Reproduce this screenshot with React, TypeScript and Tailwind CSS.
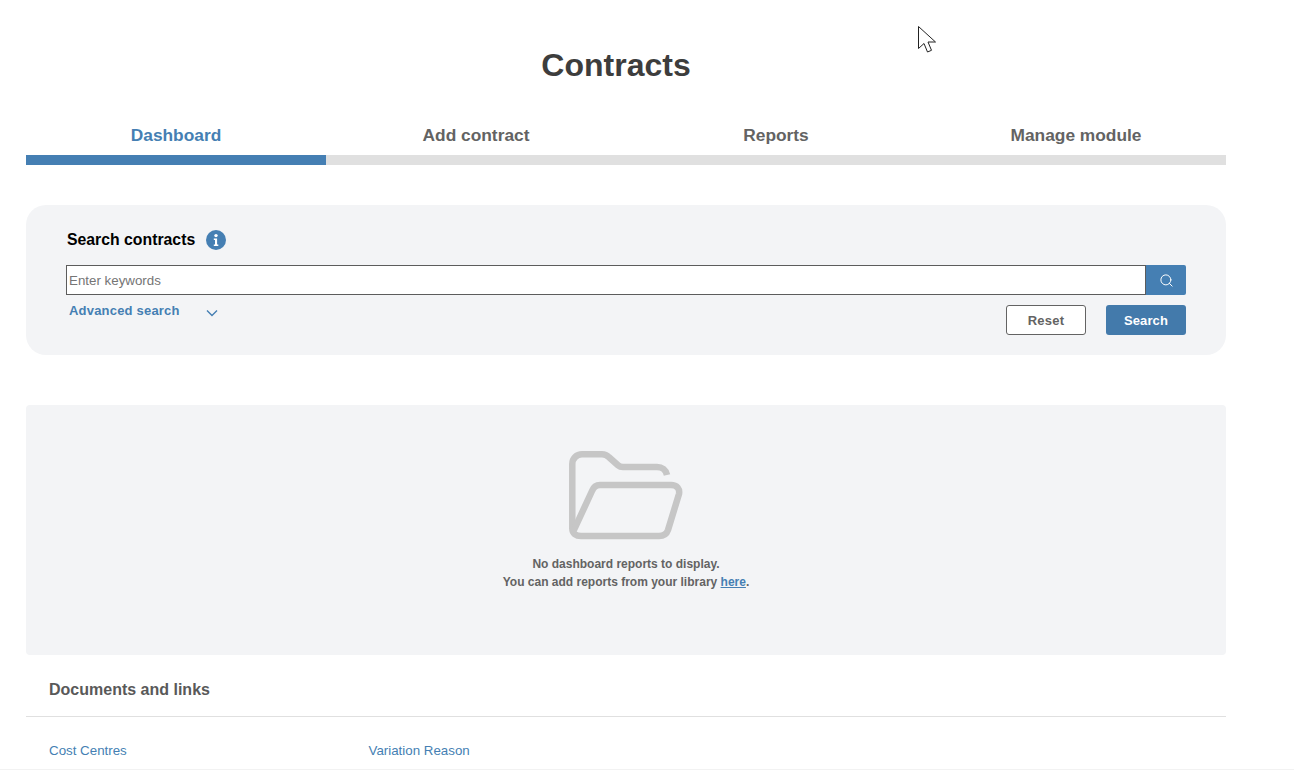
import { Search } from 'lucide-react';

const tabs = ['Dashboard', 'Add contract', 'Reports', 'Manage module'];

function InfoBadge() {
  return (
    <svg width="20" height="20" viewBox="0 0 20 20" className="ml-[11px]">
      <circle cx="10" cy="10" r="10" fill="#457fb3" />
      <circle cx="10" cy="5.6" r="1.7" fill="#fff" />
      <path d="M7.8 8.400h3.300v6h1.200v1.500H7.800v-1.500H9v-4.500H7.800z" fill="#fff" />
    </svg>
  );
}

function FolderIcon() {
  return (
    <svg width="114" height="90" viewBox="0 0 114 90" fill="none" stroke="#c6c6c6" strokeWidth="6.5" strokeLinejoin="round" strokeLinecap="butt">
      <path d="M3.300 78V13C3.300 7.500 7.500 3.300 13 3.300h20c3 0 5 1 7 3l9 8c1.500 1.300 3 1.700 5 1.700h34c5 0 9 3 10 8" />
      <path d="M4.500 80 23 40c1.500-4 4-6 8-6h71c6 0 9 4 8 9l-11 36c-1.500 4.500-4.500 6-9 6H12c-5 0-8.700-2.500-8.700-7.500" />
    </svg>
  );
}

export default function App() {
  return (
    <div className="relative h-[770px] overflow-hidden bg-white font-['Liberation_Sans',Arial,sans-serif]">
      <div className="ml-[26px] w-[1200px]">
        <h1 className="pt-[45px] pr-5 text-center text-[32px] leading-[40px] font-bold text-[#3d3d3d]">Contracts</h1>

        {/* tabs */}
        <div className="mt-10 flex">
          {tabs.map((tab, i) => (
            <div key={tab} className="flex-1">
              <div className={`h-[30px] text-center text-[17.33px] leading-5 font-bold ${i === 0 ? 'text-[#457fb3]' : 'text-[#636363]'}`}>{tab}</div>
              <div className={`h-[10px] ${i === 0 ? 'bg-[#457fb3]' : 'bg-[#e0e0e0]'}`} />
            </div>
          ))}
        </div>

        {/* search card */}
        <div className="mt-10 h-[150px] rounded-[20px] bg-[#f3f4f6] px-10 pt-[25px]">
          <div className="flex h-5 items-center pl-[1px]">
            <span className="text-[15.8px] font-bold text-black">Search contracts</span>
            <InfoBadge />
          </div>
          <div className="mt-[15px] flex h-[30px]">
            <input
              placeholder="Enter keywords"
              className="h-full min-w-0 flex-1 border border-[#5c5c5c] bg-white px-[2px] text-[13.33px] text-[#333] outline-none placeholder:text-[#757575]"
            />
            <button className="flex h-full w-10 items-center justify-center rounded-r-[2px] bg-[#457fb3]">
              <Search size={15} color="#fff" strokeWidth={1.6} />
            </button>
          </div>
          <div className="mt-[9px] flex justify-between">
            <div className="flex h-[14px] items-center pl-[3px]">
              <span className="text-[13px] font-bold tracking-[0.2px] text-[#457fb3]">Advanced search</span>
              <svg width="12" height="8" viewBox="0 0 12 8" fill="none" stroke="#457fb3" strokeWidth="1.4" className="ml-[26px] mt-[3px]">
                <path d="M1 1.500 6 6.500l5-5" />
              </svg>
            </div>
            <div className="mt-px flex gap-5">
              <button className="h-[30px] w-20 rounded-[3px] border border-[#636363] bg-white pt-px text-[13px] font-bold tracking-[0.2px] text-[#636363]">Reset</button>
              <button className="h-[30px] w-20 rounded-[3px] bg-[#437aab] pt-px text-[13px] font-bold tracking-[0.1px] text-white">Search</button>
            </div>
          </div>
        </div>

        {/* empty dashboard */}
        <div className="mt-[50px] flex h-[250px] flex-col items-center rounded-[4px] bg-[#f3f4f6] pt-[46px]">
          <FolderIcon />
          <p className="mt-[14px] text-center text-[12px] leading-[18px] font-bold text-[#636363]">
            No dashboard reports to display.
            <br />
            You can add reports from your library <a className="text-[#457fb3] underline">here</a>.
          </p>
        </div>

        {/* documents */}
        <div className="flex h-[62px] items-center border-b border-[#e0e0e0] pt-2 pl-[23px]">
          <h2 className="text-[16px] font-bold text-[#595959]">Documents and links</h2>
        </div>
        <div className="flex pt-[26px] pl-[23px] text-[13.33px] leading-[16px] text-[#457fb3]">
          <a className="w-[319.5px]">Cost Centres</a>
          <a>Variation Reason</a>
        </div>
      </div>

      <div className="absolute right-0 bottom-0 left-0 h-px bg-[#f2f2f2]" />

      {/* mouse pointer */}
      <svg width="19" height="28" viewBox="0 0 19 28" className="absolute top-[26px] left-[918px]">
        <path d="M.5.500v22l5.500-5 3.500 8.500 4-1.700-3.500-8.300h7.500z" fill="#fff" stroke="#222" strokeWidth="1" strokeLinejoin="miter" />
      </svg>
    </div>
  );
}
